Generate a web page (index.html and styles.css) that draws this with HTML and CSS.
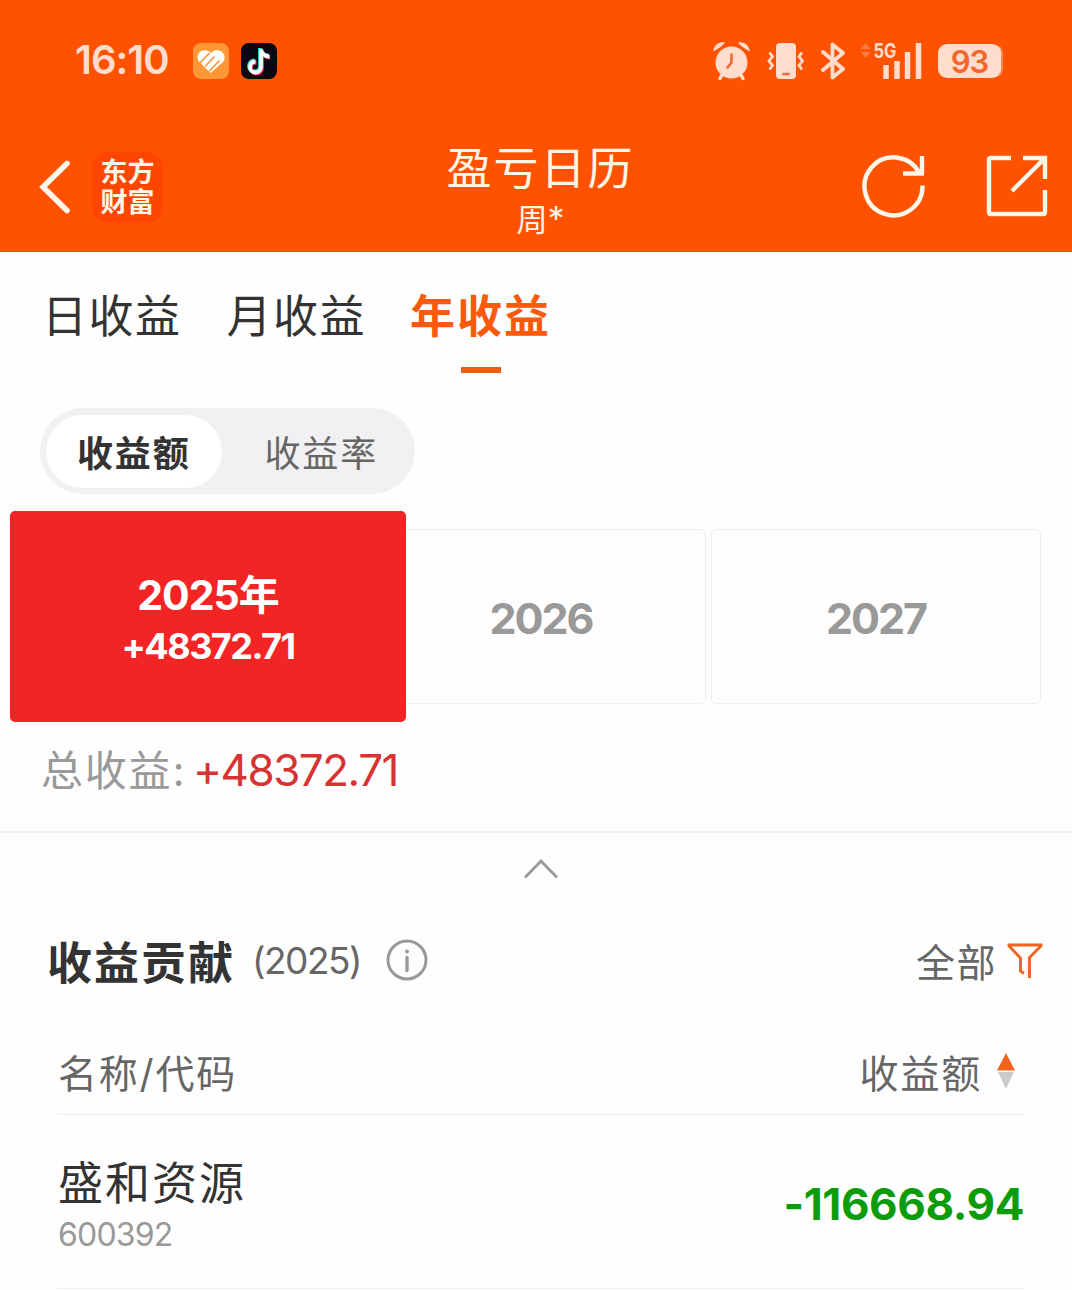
FILE: index.html
```html
<!DOCTYPE html>
<html lang="zh-CN">
<head>
    <meta charset="UTF-8">
    <meta name="viewport" content="width=device-width, initial-scale=1.0">
    <title>盈亏日历</title>
    <link rel="stylesheet" href="styles.css">
</head>
<body>
    <header class="header">
        <div class="status-bar">
            <span class="time">16:10</span>
            <svg class="app-icon" width="36" height="36" viewBox="0 0 36 36">
                <rect width="36" height="36" rx="8" fill="#ff9736"/>
                <path d="M17.500 30L6 18.500C3 15 4.500 8.500 10 7.500c3.500-.5 6 .5 8 2.500 2.500-2.500 5-3 8-2.500 5 1 7.500 7 4 11.500z" fill="#fff"/>
                <path d="M7 20.500L16.500 10.500M12 24L21.500 14M16 29L26.500 18" transform="translate(0 -.5)" stroke="#ff9736" stroke-width="1.800"/>
            </svg>
            <svg class="app-icon" width="36" height="36" viewBox="0 0 36 36">
                <rect width="36" height="36" rx="8" fill="#0b0711"/>
                <g fill="none" stroke-width="3.800">
                    <path d="M19 5v18a5.500 5.500 0 1 1-5.500-5.500M19 6c1 4 4 6.500 8.500 6.500" stroke="#35e0e0"/>
                    <path d="M21 7v18a5.500 5.500 0 1 1-5.500-5.500M21 8c1 4 4 6.500 8 6.500" stroke="#f5305a"/>
                    <path d="M20 6v18a5.500 5.500 0 1 1-5.500-5.500M20 7c1 4 4 6.500 8.500 6.500" stroke="#fff"/>
                </g>
            </svg>
            <div class="status-icons">
                <svg width="38" height="40" viewBox="0 0 38 40">
                    <circle cx="18.500" cy="21.500" r="16" fill="#ffdccb"/>
                    <path d="M0 10.500C1 4 6 0 12 1.500Q9 6 0 10.500zM37 10.500C36 4 31 0 25 1.500Q28 6 37 10.500z" fill="#ffdccb"/>
                    <path d="M9 34l-2 3.500M28 34l2 3.500" stroke="#ffdccb" stroke-width="3.500" stroke-linecap="round"/>
                    <path d="M18.500 13.500v8l-4 5" stroke="#f4672a" stroke-width="2.500" fill="none" stroke-linecap="round"/>
                </svg>
                <svg class="vibrate" width="38" height="40" viewBox="0 0 38 40">
                    <rect x="9" y="2" width="20" height="36" rx="4" fill="#ffdccb"/>
                    <path d="M15.500 33h7" stroke="#f4672a" stroke-width="2.500"/>
                    <path d="M2.500 11.500l3 4-3.500 4.500 3.500 4.500-3 4M35 11.500l-3 4 3.500 4.500-3.500 4.500 3 4" stroke="#ffdccb" stroke-width="2.800" fill="none"/>
                </svg>
                <svg class="bluetooth" width="24" height="40" viewBox="0 0 24 40">
                    <path d="M2 11l20 17-10.500 8.500V3.500L22 12 2 29" stroke="#ffdccb" stroke-width="3.800" fill="none" stroke-linejoin="round" stroke-linecap="round"/>
                </svg>
                <svg class="signal" width="64" height="52" viewBox="0 -6 64 52">
                    <path d="M0.500 8l5-6 5 6zM0.500 11l5 6 5-6z" fill="#ff7b3f"/>
                    <text x="13.500" y="16.500" class="signal-text" textLength="23" lengthAdjust="spacingAndGlyphs">5G</text>
                    <path d="M26 24v14M37 20v18M47.500 11v27M58.500 2v36" stroke="#ffdccb" stroke-width="5.500"/>
                </svg>
                <span class="battery">93</span>
            </div>
        </div>
        <div class="title-bar">
            <svg class="back" width="32" height="54" viewBox="0 0 32 54">
                <path d="M28 3.500L4 27l24 23.500" stroke="#fff5e8" stroke-width="5.500" fill="none" stroke-linecap="round"/>
            </svg>
            <div class="logo">东方<br>财富</div>
            <div class="title">
                <h1>盈亏日历</h1>
                <p>周<span class="mask">*</span></p>
            </div>
            <svg class="refresh" width="64" height="64" viewBox="0 0 64 64">
                <path d="M60.500 31.500A29 29 0 1 1 57 18.500M60 2v18M41 19.500h21" stroke="#fff5e8" stroke-width="4.400" fill="none"/>
            </svg>
            <svg class="share" width="62" height="62" viewBox="0 0 62 62">
                <path d="M25 3H5Q3 3 3 5v52q0 2 2 2h52q2 0 2-2V35M37 3h22v21M59 3L26 36" stroke="#fff5e8" stroke-width="4.400" fill="none"/>
            </svg>
        </div>
    </header>

    <nav class="tabs">
        <a class="tab">日收益</a>
        <a class="tab">月收益</a>
        <a class="tab active">年收益</a>
    </nav>

    <div class="segment">
        <span class="segment-item active">收益额</span>
        <span class="segment-item">收益率</span>
    </div>

    <div class="years">
        <div class="year active">
            <strong>2025年</strong>
            <span>+48372.71</span>
        </div>
        <div class="year">2026</div>
        <div class="year">2027</div>
    </div>

    <div class="total">总收益: <span class="total-value">+48372.71</span></div>

    <div class="collapse">
        <svg width="36" height="22" viewBox="0 0 36 22">
            <path d="M2 18.500L18 2l16 16.500" stroke="#999" stroke-width="2.800" fill="none"/>
        </svg>
    </div>

    <section class="contribution">
        <div class="section-head">
            <h2>收益贡献</h2>
            <span class="section-year">(2025)</span>
            <svg class="info" width="42" height="42" viewBox="0 0 42 42">
                <circle cx="21" cy="21" r="19" fill="none" stroke="#999" stroke-width="3"/>
                <circle cx="21" cy="12.500" r="2" fill="#999"/>
                <path d="M21 18.500v13" stroke="#999" stroke-width="3.400" stroke-linecap="round"/>
            </svg>
            <span class="filter">全部</span>
            <svg width="36" height="37" viewBox="0 0 36 37">
                <path d="M17 31.500l-3.500-2.500V16L2 4v-1h32v1L22.500 15.500V36" stroke="#ed6420" stroke-width="2.900" fill="none"/>
            </svg>
        </div>
        <div class="table-head">
            <span>名称/代码</span>
            <span class="sort">收益额</span>
            <svg width="18" height="36" viewBox="0 0 18 36">
                <path d="M9 0l9 17.500H0z" fill="#f0641c"/>
                <path d="M9 36l8-17H1z" fill="#ccc"/>
            </svg>
        </div>
        <div class="stock">
            <div>
                <div class="stock-name">盛和资源</div>
                <div class="stock-code">600392</div>
            </div>
            <div class="stock-amount">-116668.94</div>
        </div>
    </section>
</body>
</html>
```

FILE: styles.css
```css
* {
    box-sizing: border-box;
}

body {
    margin: 0;
    width: 1072px;
    height: 1290px;
    overflow: hidden;
    background-color: #fefefe;
    color: #333;
    font-family: Inter, "Noto Sans CJK SC", sans-serif;
}

h1, h2, p {
    margin: 0;
}

svg {
    display: block;
    flex: none;
}

.header {
    height: 252px;
    background-color: #ff5200;
    color: #fff5e8;
}

.status-bar {
    display: flex;
    align-items: center;
    height: 122px;
    padding: 0 71px 0 75px;
}

.time {
    width: 118px;
    padding-bottom: 3px;
    color: #ffdccb;
    font-size: 40px;
    font-weight: 600;
    letter-spacing: -1px;
}

.app-icon {
    margin-right: 12px;
}

.status-icons {
    display: flex;
    align-items: center;
    margin-left: auto;
}

.vibrate {
    margin-left: 16px;
}

.bluetooth {
    margin-left: 16px;
}

.signal {
    margin-left: 15px;
}

.signal-text {
    fill: #ffdccb;
    font-size: 20px;
    font-weight: 700;
}

.battery {
    width: 63px;
    height: 34px;
    margin-left: 14px;
    border-radius: 9px;
    background-color: #ffdccb;
    box-shadow: 3px 0 0 -1px #ff8a55;
    color: #f4672a;
    font-size: 31px;
    font-weight: 600;
    letter-spacing: -1px;
    line-height: 35px;
    text-align: center;
}

.title-bar {
    display: flex;
    align-items: center;
    height: 130px;
    padding: 0 24px 0 39px;
}

.logo {
    width: 71px;
    height: 71px;
    margin-left: 21px;
    padding-top: 6px;
    border-radius: 16px;
    background-color: #ff4600;
    font-size: 27px;
    font-weight: 700;
    line-height: 30px;
    text-align: center;
}

.title {
    flex: 1;
    padding: 9px 0 0 56px;
    text-align: center;
}

.title h1 {
    font-size: 45px;
    font-weight: 400;
    letter-spacing: 2px;
    line-height: 56px;
}

.title p {
    font-size: 31px;
    line-height: 44px;
}

.mask {
    font-size: 34px;
}

.refresh {
    margin-top: -3px;
}

.share {
    margin: -2px 0 0 60px;
}

.tabs {
    display: flex;
    gap: 45px;
    height: 156px;
    padding: 37px 0 0 42px;
}

.tab {
    height: 86px;
    font-size: 45px;
    letter-spacing: 1.5px;
    line-height: 56px;
}

.tab.active {
    margin-left: -1px;
    color: #fa5a0a;
    font-weight: 700;
    letter-spacing: 2px;
}

.tab.active::after {
    content: "";
    display: block;
    width: 40px;
    height: 6px;
    margin: 22px auto 0;
    background-color: #ec5c12;
}

.segment {
    display: flex;
    width: 375px;
    height: 86px;
    margin-left: 40px;
    padding: 7px 6px 6px;
    border-radius: 43px;
    background-color: #f1f1f4;
}

.segment-item {
    width: 176px;
    height: 73px;
    border-radius: 37px;
    color: #666;
    font-size: 36px;
    letter-spacing: 1.9px;
    line-height: 78px;
    text-align: center;
}

.segment-item + .segment-item {
    margin-left: 12px;
}

.segment-item.active {
    background-color: #fff;
    color: #333;
    font-weight: 700;
}

.years {
    display: grid;
    grid-template-columns: repeat(3, 330px);
    gap: 5px;
    height: 175px;
    margin: 35px 0 0 41px;
}

.year {
    display: flex;
    flex-direction: column;
    align-items: center;
    justify-content: center;
    padding-top: 3px;
    border: 1px solid #eee;
    border-radius: 5px;
    color: #999;
    font-size: 43px;
    font-weight: 700;
    letter-spacing: -2px;
}

/* selected year overlaps its neighbours */
.year.active {
    z-index: 1;
    margin: -18px -35px -18px -31px;
    padding-top: 6px;
    border: none;
    background-color: #f32424;
    color: #fff;
    line-height: 52px;
}

.year.active strong {
    font-size: 41px;
    font-weight: 700;
    letter-spacing: -1px;
}

.year.active span {
    font-size: 36px;
    letter-spacing: -1.5px;
    line-height: 50px;
}

.total {
    height: 127px;
    padding: 38px 0 0 41px;
    color: #999;
    font-size: 42px;
    letter-spacing: 1.8px;
    line-height: 56px;
}

.total-value {
    margin-left: -7px;
    color: #d83232;
    font-size: 44px;
    letter-spacing: -1.5px;
}

.collapse {
    display: flex;
    justify-content: center;
    height: 90px;
    padding: 26px 0 0 9px;
    border-top: 2px solid #eee;
}

.section-head {
    display: flex;
    align-items: center;
    height: 78px;
    padding: 0 29px 0 47px;
}

.section-head h2 {
    padding-top: 8px;
    font-size: 45px;
    font-weight: 700;
    letter-spacing: 2px;
    line-height: 60px;
}

.section-year {
    margin-left: 17px;
    color: #666;
    font-size: 37px;
    letter-spacing: -1.5px;
}

.info {
    margin-left: 25px;
}

.filter {
    margin: 0 10px 0 auto;
    color: #666;
    font-size: 39px;
    letter-spacing: 1.5px;
}

.table-head {
    display: flex;
    align-items: center;
    height: 116px;
    margin: 0 48px 0 58px;
    padding: 29px 9px 0 0;
    border-bottom: 1px solid #eee;
    color: #666;
    font-size: 39px;
    letter-spacing: 1.8px;
}

.sort {
    margin: 0 15px 0 auto;
}

.stock {
    display: flex;
    align-items: center;
    justify-content: space-between;
    height: 174px;
    margin: 0 48px 0 58px;
    border-bottom: 1px solid #eee;
}

.stock-name {
    margin-top: 10px;
    font-size: 45px;
    letter-spacing: 2px;
    line-height: 56px;
}

.stock-code {
    color: #999;
    font-size: 32px;
    letter-spacing: -0.8px;
    line-height: 46px;
}

.stock-amount {
    padding-top: 5px;
    color: #0b9c0b;
    font-size: 44px;
    font-weight: 700;
    letter-spacing: -0.4px;
}
```
